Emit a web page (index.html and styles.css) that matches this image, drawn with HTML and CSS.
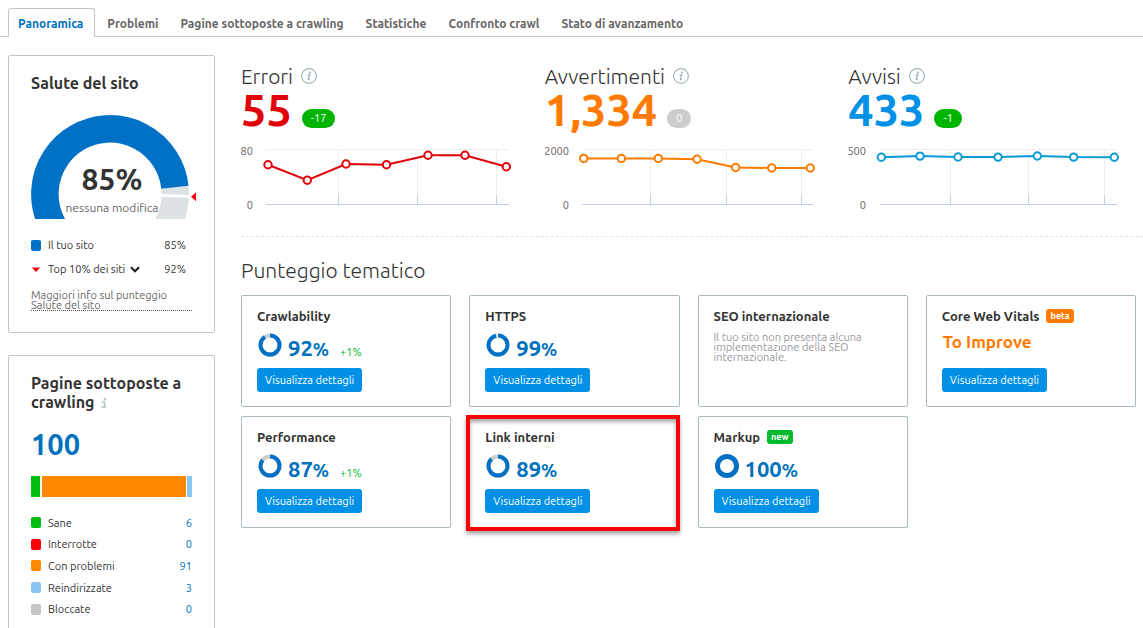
FILE: index.html
```html
<!DOCTYPE html>
<html lang="it">
<head>
<meta charset="utf-8">
<meta name="viewport" content="width=device-width, initial-scale=1">
<title>Panoramica</title>
<link rel="stylesheet" href="styles.css">
</head>
<body>
<svg class="defs" width="0" height="0" aria-hidden="true">
  <symbol id="info" viewBox="0 0 16 16">
    <circle cx="8" cy="8" r="7.4" fill="none" stroke="#a3b5ba" stroke-width="1.1"/>
    <circle cx="9" cy="4.4" r="1" fill="#9aaeb4"/>
    <path d="M6.6 6.9h2.1L7.4 11.2q-.1.6.4.5l1-.4" fill="none" stroke="#9aaeb4" stroke-width="1.2"/>
  </symbol>
</svg>
<div class="page">
  <nav class="tabs">
    <a class="tab tab-active" href="#">Panoramica</a>
    <a class="tab" href="#">Problemi</a>
    <a class="tab" href="#">Pagine sottoposte a crawling</a>
    <a class="tab" href="#">Statistiche</a>
    <a class="tab" href="#">Confronto crawl</a>
    <a class="tab" href="#">Stato di avanzamento</a>
  </nav>
  <div class="layout">
    <aside class="sidebar">
      <section class="panel health">
        <h2 class="panel-title">Salute del sito</h2>
        <svg class="gauge" viewBox="0 0 167 104" role="img" aria-label="85%">
          <path d="M143.9 72.2A65.2 65.2 0 0 1 117 132" fill="none" stroke="#dde2e4" stroke-width="27.5"/>
          <path d="M41 132A65.2 65.2 0 1 1 143.9 72.2" fill="none" stroke="#0071c5" stroke-width="27.5"/>
          <path d="M129 80.3L159 81.4" stroke="#fff" stroke-width="2.8"/>
          <path d="M160 81.7l5-4.5v9z" fill="#fb0012"/>
          <text class="gauge-value" x="81" y="75">85%</text>
          <text class="gauge-note" x="81" y="97">nessuna modifica</text>
        </svg>
        <div class="legend legend-health">
          <div class="row"><span class="swatch blue"></span><span class="name">Il tuo sito</span><span>85%</span></div>
          <div class="row">
            <svg class="swatch" viewBox="0 0 10 10" aria-hidden="true"><path d="M.8 3h8.4L5 7.4z" fill="#f0000f"/></svg>
            <select class="picker" aria-label="Confronto"><option>Top 10% dei siti</option></select>
            <svg class="chevron" viewBox="0 0 10 7" aria-hidden="true"><path d="M1 1.2l4 4 4-4" fill="none" stroke="#222" stroke-width="2.2"/></svg>
            <span class="end">92%</span>
          </div>
        </div>
        <a class="more" href="#">Maggiori info sul punteggio Salute del sito</a>
      </section>
      <section class="panel crawled">
        <h2 class="panel-title">Pagine sottoposte a crawling <svg class="mini-info" viewBox="0 0 6 10" aria-hidden="true"><circle cx="4" cy="1.3" r="1.3" fill="#b4c3c8"/><path d="M.8 4h2.7v4.6M.3 9h5" fill="none" stroke="#b4c3c8" stroke-width="1.5"/></svg></h2>
        <div class="total">100</div>
        <div class="bar"><span class="green" style="width:9px"></span><span class="orange fill"></span><span class="sky" style="width:5px"></span></div>
        <div class="legend legend-pages">
          <div class="row"><span class="swatch green"></span><span class="name">Sane</span><a href="#">6</a></div>
          <div class="row"><span class="swatch red"></span><span class="name">Interrotte</span><a href="#">0</a></div>
          <div class="row"><span class="swatch orange"></span><span class="name">Con problemi</span><a href="#">91</a></div>
          <div class="row"><span class="swatch sky"></span><span class="name">Reindirizzate</span><a href="#">3</a></div>
          <div class="row"><span class="swatch gray"></span><span class="name">Bloccate</span><a href="#">0</a></div>
        </div>
      </section>
    </aside>
    <main class="main">
      <div class="metrics">
        <section class="metric errors">
          <h2 class="heading">Errori <svg class="info"><use href="#info"/></svg></h2>
          <div class="figure"><strong>55</strong><span class="pill">-17</span></div>
          <svg class="chart" viewBox="0 0 276 70">
            <path class="grid" d="M25 7.5h243M97.500 8v54M176.500 8v54M255.500 8v54"/>
            <path class="axis" d="M25 62.500h243M97.500 53v9M176.500 53v9M255.500 53v9"/>
            <text x="12" y="13">80</text><text x="12" y="67">0</text>
            <polyline points="27,22.7 66.3,38.2 105,22 145.5,22.8 187,13.3 224,13.3 265.3,24.7"/>
            <circle cx="27" cy="22.7" r="3.7"/><circle cx="66.3" cy="38.2" r="3.7"/><circle cx="105" cy="22" r="3.7"/><circle cx="145.500" cy="22.8" r="3.7"/><circle cx="187" cy="13.3" r="3.7"/><circle cx="224" cy="13.3" r="3.7"/><circle cx="265.3" cy="24.7" r="3.7"/>
          </svg>
        </section>
        <section class="metric warnings">
          <h2 class="heading">Avvertimenti <svg class="info"><use href="#info"/></svg></h2>
          <div class="figure"><strong>1,334</strong><span class="pill pill-none">0</span></div>
          <svg class="chart" viewBox="0 0 276 70">
            <path class="grid" d="M37 7.5h231M105.500 8v54M181.500 8v54M256.500 8v54"/>
            <path class="axis" d="M37 62.500h231M105.500 53v9M181.500 53v9M256.500 53v9"/>
            <text x="24" y="13">2000</text><text x="24" y="67">0</text>
            <polyline points="38.7,16.4 76.3,16.4 113.3,16.4 152,17.2 190.7,25.5 226.7,26 265.3,26"/>
            <circle cx="38.7" cy="16.4" r="3.7"/><circle cx="76.3" cy="16.4" r="3.7"/><circle cx="113.3" cy="16.4" r="3.7"/><circle cx="152" cy="17.2" r="3.7"/><circle cx="190.7" cy="25.5" r="3.7"/><circle cx="226.7" cy="26" r="3.7"/><circle cx="265.3" cy="26" r="3.7"/>
          </svg>
        </section>
        <section class="metric notices">
          <h2 class="heading">Avvisi <svg class="info"><use href="#info"/></svg></h2>
          <div class="figure"><strong>433</strong><span class="pill">-1</span></div>
          <svg class="chart" viewBox="0 0 276 70">
            <path class="grid" d="M32 7.5h237M102.500 8v54M180.500 8v54M256.500 8v54"/>
            <path class="axis" d="M32 62.500h237M102.500 53v9M180.500 53v9M256.500 53v9"/>
            <text x="18" y="13">500</text><text x="18" y="67">0</text>
            <polyline points="33.3,15.3 72,14.1 110,15 150,15.1 189.3,14 225.7,15.1 266.3,15.200"/>
            <circle cx="33.3" cy="15.3" r="3.7"/><circle cx="72" cy="14.1" r="3.7"/><circle cx="110" cy="15" r="3.7"/><circle cx="150" cy="15.1" r="3.7"/><circle cx="189.3" cy="14" r="3.7"/><circle cx="225.7" cy="15.1" r="3.7"/><circle cx="266.3" cy="15.2" r="3.7"/>
          </svg>
        </section>
      </div>
      <h2 class="heading scores-heading">Punteggio tematico</h2>
      <div class="cards">
        <section class="card">
          <h3 class="card-title">Crawlability</h3>
          <div class="score"><svg class="ring" viewBox="0 0 24 24"><circle class="rest" cx="12" cy="12" r="9.500"/><circle class="done" cx="12" cy="12" r="9.500" pathLength="100" stroke-dasharray="91 100"/></svg><b>92<small>%</small></b><span class="change">+1%</span></div>
          <button class="button" type="button">Visualizza dettagli</button>
        </section>
        <section class="card">
          <h3 class="card-title">HTTPS</h3>
          <div class="score"><svg class="ring" viewBox="0 0 24 24"><circle class="rest faint" cx="12" cy="12" r="9.500"/><circle class="done" cx="12" cy="12" r="9.500" pathLength="100" stroke-dasharray="97 100"/></svg><b>99<small>%</small></b></div>
          <button class="button" type="button">Visualizza dettagli</button>
        </section>
        <section class="card">
          <h3 class="card-title">SEO internazionale</h3>
          <p class="empty">Il tuo sito non presenta alcuna implementazione della SEO internazionale.</p>
        </section>
        <section class="card">
          <h3 class="card-title">Core Web Vitals <span class="tag tag-beta">beta</span></h3>
          <div class="verdict">To Improve</div>
          <button class="button" type="button">Visualizza dettagli</button>
        </section>
        <section class="card">
          <h3 class="card-title">Performance</h3>
          <div class="score"><svg class="ring" viewBox="0 0 24 24"><circle class="rest" cx="12" cy="12" r="9.500"/><circle class="done" cx="12" cy="12" r="9.500" pathLength="100" stroke-dasharray="86 100"/></svg><b>87<small>%</small></b><span class="change">+1%</span></div>
          <button class="button" type="button">Visualizza dettagli</button>
        </section>
        <section class="card card-marked">
          <h3 class="card-title">Link interni</h3>
          <div class="score"><svg class="ring" viewBox="0 0 24 24"><circle class="rest" cx="12" cy="12" r="9.500"/><circle class="done" cx="12" cy="12" r="9.500" pathLength="100" stroke-dasharray="88 100"/></svg><b>89<small>%</small></b></div>
          <button class="button" type="button">Visualizza dettagli</button>
        </section>
        <section class="card">
          <h3 class="card-title">Markup <span class="tag tag-new">new</span></h3>
          <div class="score"><svg class="ring" viewBox="0 0 24 24"><circle class="done full" cx="12" cy="12" r="9.500"/></svg><b>100<small>%</small></b></div>
          <button class="button" type="button">Visualizza dettagli</button>
        </section>
      </div>
    </main>
  </div>
</div>
</body>
</html>
```
FILE: styles.css
```css
* { box-sizing: border-box; }
body {
  margin: 0;
  background: #fff;
  color: #333;
  font-family: Ubuntu, "Open Sans", "Noto Sans", sans-serif;
  font-size: 11px;
}
h2, h3, p { margin: 0; }
a { color: #0071bc; text-decoration: none; }
.defs { position: absolute; }
.page { display: flex; flex-direction: column; min-height: 100vh; }

.tabs {
  display: flex;
  gap: 2px;
  height: 37px;
  padding: 8px 8px 0;
  border-bottom: 1px solid #c4c7c8;
}
.tab {
  padding: 0 9px;
  border: 1px solid transparent;
  border-bottom: 0;
  color: #666;
  font-size: 12px;
  font-weight: 600;
  line-height: 29px;
}
.tab-active {
  height: 29px;
  padding-right: 11px;
  border-color: #c4c7c8;
  border-radius: 3px 3px 0 0;
  background: #fff;
  color: #0071bc;
}

.layout { display: flex; flex: 1; gap: 26px; padding: 18px 0 0 8px; }
.sidebar { display: flex; flex-direction: column; flex: 0 0 207px; gap: 22px; }
.panel { padding: 18px 22px 0; border: 1px solid #c4c7c8; border-radius: 2px; }
.health { height: 278px; }
.crawled { flex: 1; border-bottom: 0; border-radius: 2px 2px 0 0; }
.panel-title { margin-right: -8px; font-size: 16px; font-weight: 600; line-height: 19px; }
.gauge { display: block; width: 167px; height: 104px; margin: 22px -8px 0 0; overflow: hidden; }
.gauge text { text-anchor: middle; }
.gauge-value { fill: #333; font-size: 30px; font-weight: 700; }
.gauge-note { fill: #666; font-size: 12px; }

.legend { display: grid; }
.row { display: flex; align-items: center; }
.swatch { flex: none; width: 10px; height: 11px; margin-right: 7px; border-radius: 2px; }
.name { flex: 1; }
.end { margin-left: auto; }
.legend-health { grid-auto-rows: 24px; margin-top: 14px; padding-right: 6px; }
.legend-pages { grid-auto-rows: 1fr; height: 108px; margin-top: 15px; }
.picker { padding: 0; border: 0; background: none; color: inherit; font: inherit; appearance: none; }
.chevron { width: 10px; height: 7px; margin-left: 4px; }
.more {
  display: block;
  margin-top: 9px;
  border-bottom: 1px dotted #555;
  color: #666;
  line-height: 10px;
}
.mini-info { width: 6px; height: 10px; margin-left: 3px; }
.total { margin-top: 16px; color: #0071bc; font-size: 29px; font-weight: 700; line-height: 32px; }
.bar { display: flex; gap: 1px; height: 21px; margin-top: 16px; }
.fill { flex: 1; margin-left: 1px; }
.blue { background: #0071c5; }
.green { background: #00bd0f; }
.red { background: #fb0007; }
.orange { background: #ff8800; }
.sky { background: #8ac6f1; }
.gray { background: #c4c4c4; }

.main { flex: 1; min-width: 0; }
.metrics {
  display: grid;
  grid-template-columns: repeat(3, 1fr);
  gap: 9px;
  padding-bottom: 24px;
  border-bottom: 1px dashed #e2e5e6;
}
.heading { display: flex; align-items: center; gap: 8px; font-size: 21px; font-weight: 300; line-height: 28px; }
.metric .heading { padding-top: 7px; }
.info { width: 16px; height: 16px; }
.figure { display: flex; align-items: flex-end; gap: 10px; height: 40px; }
.figure strong { font-size: 45px; font-weight: 700; line-height: 40px; }
.pill {
  margin-bottom: 2px;
  padding: 0 9px;
  border-radius: 10px;
  background: #00b400;
  color: #fff;
  line-height: 19px;
}
.pill-none { background: #ccc; }
.errors { color: #e1000a; }
.warnings { color: #ff7a00; }
.notices { color: #0091e6; }
.metric .heading { color: #333; }
.chart { display: block; width: 100%; max-width: 276px; margin-top: 12px; overflow: visible; }
.chart text { fill: #666; font-size: 11px; text-anchor: end; }
.grid { fill: none; stroke: #eee; }
.axis { fill: none; stroke: #c0d0e0; }
.chart polyline { fill: none; stroke: currentColor; stroke-width: 2; }
.chart circle { fill: #fff; stroke: currentColor; stroke-width: 2; }
.notices .chart { color: #0a9bd3; }

.scores-heading { margin: 19px 0 11px; }
.cards {
  display: grid;
  grid-template-columns: repeat(4, 1fr);
  grid-auto-rows: 112px;
  gap: 9px 18px;
  padding-right: 7px;
}
.card { position: relative; padding: 11px 15px; border: 1px solid #a9b9bf; border-radius: 2px; }
.card-marked::after {
  content: "";
  position: absolute;
  inset: -2px -1px -4px -4px;
  border: 4px solid #fb0007;
  box-shadow: 0 3px 4px rgba(0, 0, 0, .35), inset 0 3px 4px rgba(0, 0, 0, .35);
  pointer-events: none;
}
.card-title { display: flex; align-items: center; gap: 7px; font-size: 13px; font-weight: 700; line-height: 18px; }
.tag { padding: 0 4px; border-radius: 3px; color: #fff; font-size: 9px; line-height: 14px; }
.tag-beta { background: #ff7a00; }
.tag-new { background: #00b92d; }
.score { display: flex; align-items: baseline; height: 43px; padding: 8px 0 0 1px; color: #0071bc; }
.ring { align-self: flex-start; width: 24px; height: 24px; margin-right: 6px; transform: rotate(-90deg); }
.ring circle { fill: none; stroke-width: 4; }
.rest { stroke: #ccc; }
.faint { stroke: #f4f4f4; }
.done { stroke: #0071c5; }
.ring .full { stroke-width: 5; }
.score b { font-size: 22px; line-height: 30px; }
.score small { font-size: 18px; }
.change { margin-left: 11px; color: #00b92d; font-size: 11px; }
.verdict { height: 43px; padding: 5px 1px 0; color: #ff7a00; font-size: 17px; font-weight: 700; line-height: 24px; }
.button {
  height: 24px;
  padding: 0 8px;
  border: 0;
  border-radius: 3px;
  background: #0091e6;
  color: #fff;
  font: inherit;
}
.empty { margin-top: 7px; color: #999; font-size: 11px; line-height: 10px; }
```
